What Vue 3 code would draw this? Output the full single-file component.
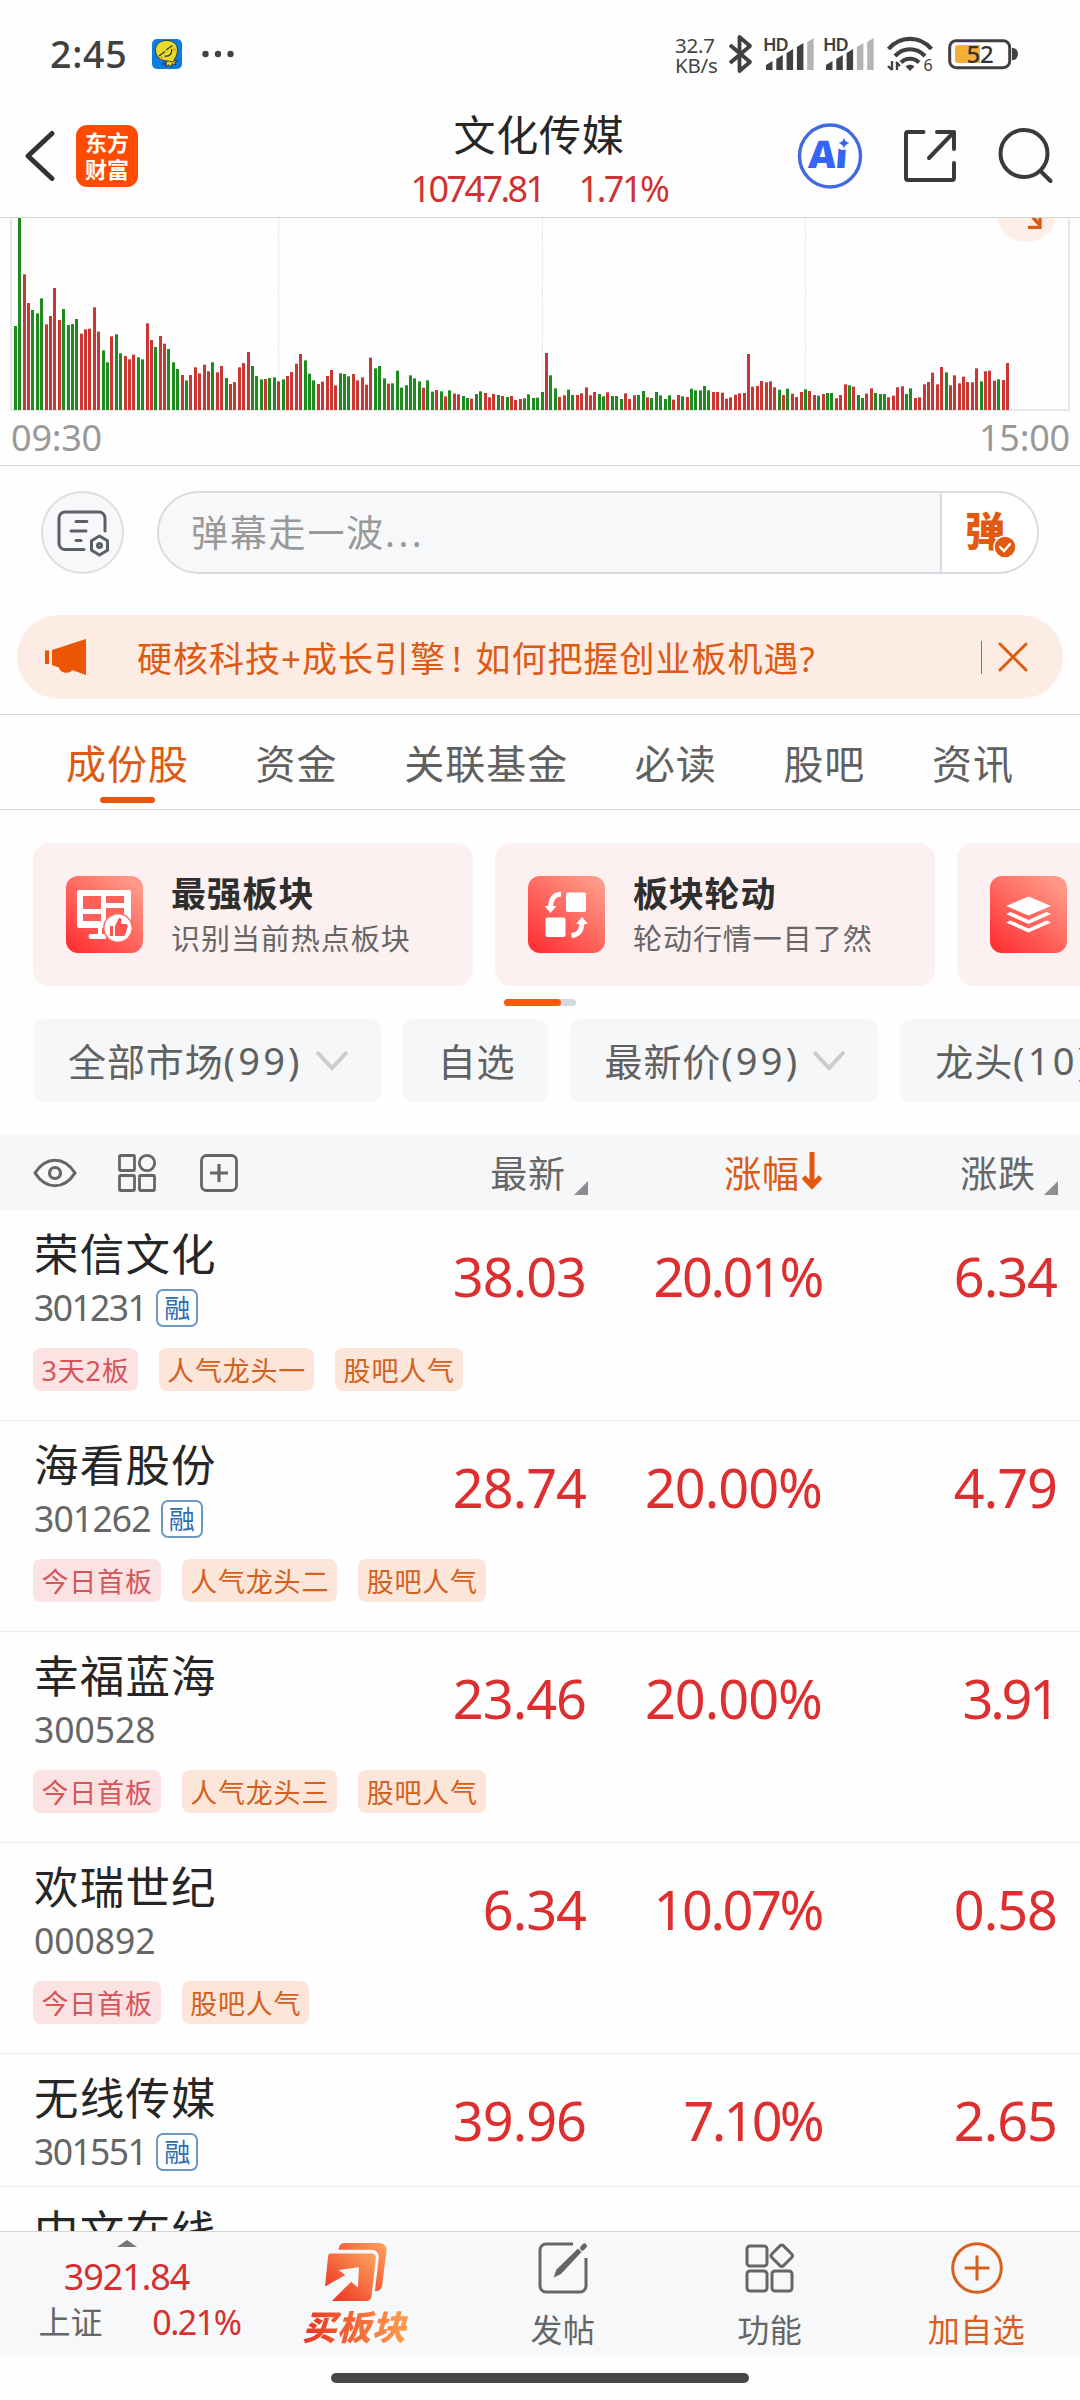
<script setup>
// Volume ticks of the session: value is the bar's top edge on a 600-unit axis, negative when the price fell.
const ticks = [
  -348, -20, 193, 279, -300, -310, -265, 343, 318, 234, 330, -297, -345, -342, -327, 371, 358, 356, 292, 365,
  -421, -457, 379, -373, -430, 438, 448, 434, -442, -448, 340, 390, -411, 378, 401, -417, -457, -477, 495, -511,
  495, 472, 490, 464, 484, -457, 487, 468, -504, 522, 516, 472, 459, 426, -468, -498, -508, 507, -504, -502,
  514, -508, 498, 486, 461, 432, -451, -491, -511, 522, 515, 498, 480, 526, -490, -492, -499, 492, 511, 502,
  524, 443, -475, -468, -505, 521, -520, -482, -533, -526, -496, -505, -514, 533, -511, -545, 540, -544, 559, -541,
  551, 553, -558, -564, 566, -552, -544, 549, 562, 552, -555, 558, -561, 558, 570, 567, -565, -553, -564, -563,
  -546, 429, -496, -535, 561, 556, -539, -555, 555, 550, 532, 556, 546, -552, -559, 547, -558, -558, -567, 550,
  567, 556, -555, -543, 562, -564, -546, -556, -567, -556, 569, 555, -559, 561, -536, -541, -541, -528, -541, 546,
  546, 548, 566, 562, 554, 550, 549, 432, 530, 528, 513, 517, 514, 532, -539, 555, -536, 551, 561, 546,
  -538, 543, 555, -557, 552, -549, -549, 565, 555, 523, -526, 530, -555, -564, 551, 535, -549, -552, -552, 562,
  557, 532, 529, -552, -535, 564, 562, 523, 516, 488, 523, 471, -487, 526, 496, 520, 500, 516, 517, 475,
  -514, 484, 482, 512, -508, 510, 459,
]
const bars = ticks.map((t, i) => ({ x: Math.round((41.5 + 13.17 * i) / 3) * 3, y: Math.abs(t), up: t > 0 }))

const tabs = ['成份股', '资金', '关联基金', '必读', '股吧', '资讯']

const stocks = [
  { name: '荣信文化', code: '301231', margin: true, price: '38.03', pct: '20.01%', diff: '6.34', tags: ['3天2板', '人气龙头一', '股吧人气'] },
  { name: '海看股份', code: '301262', margin: true, price: '28.74', pct: '20.00%', diff: '4.79', tags: ['今日首板', '人气龙头二', '股吧人气'] },
  { name: '幸福蓝海', code: '300528', price: '23.46', pct: '20.00%', diff: '3.91', tags: ['今日首板', '人气龙头三', '股吧人气'] },
  { name: '欢瑞世纪', code: '000892', price: '6.34', pct: '10.07%', diff: '0.58', tags: ['今日首板', '股吧人气'] },
  { name: '无线传媒', code: '301551', margin: true, price: '39.96', pct: '7.10%', diff: '2.65', tags: [] },
  { name: '中文在线', code: '', price: '', pct: '', diff: '', tags: [] },
]

// Tighter tracking for figures that contain the narrow digit 1.
const track = (s, k = 0.16, base = 0.018) => {
  const ones = (s.match(/1/g) || []).length
  return { letterSpacing: `${-(base + (k * ones) / (s.length || 1)).toFixed(4)}em` }
}
const levels = [[2, 24], [12.3, 18], [22.6, 12], [32.9, 6], [43.2, 1]]
</script>

<template>
  <div class="page">
    <div class="status">
      <span class="clock">2:45</span>
      <svg class="chick" width="30" height="30" viewBox="0 0 30 30">
        <rect width="30" height="30" rx="5" fill="#0f7de0" />
        <path d="M16 19l-1.500 4.500-4 1.500 4-.3-.5 3 3-2 2.500 2.500.5-3.500 4 1.500-1.500-3 3-1-3-1-1-5z" fill="#e6da2b" stroke="#222" stroke-width=".8" />
        <path d="M14.500 1.500c7 0 11 4 11 9.500 0 5-2.500 8-4.500 12l-5-1c-7 0-12-4-12.500-10-.5-6 4-10.500 11-10.500z" fill="#e6da2b" stroke="#222" stroke-width=".8" />
        <path d="M7 17l6-4.500M14 11l6.500-4.500M19.500 10c1 5-2.500 8-7 7" fill="none" stroke="#333" stroke-width="1.200" />
        <circle cx="9.500" cy="19" r="1.500" fill="#f0a02b" /><circle cx="22.500" cy="10.500" r="1.500" fill="#f0a02b" />
      </svg>
      <svg class="dots" width="32" height="8" viewBox="0 0 32 8" fill="#444"><circle cx="3.500" cy="4" r="3.200" /><circle cx="16" cy="4" r="3.200" /><circle cx="28.500" cy="4" r="3.200" /></svg>
      <span class="grow"></span>
      <div class="net"><span>32.7</span><span>KB/s</span></div>
      <svg class="bt" width="24" height="40" viewBox="0 0 24 40" fill="none" stroke="#404040" stroke-width="3.800" stroke-linejoin="round"><path d="M2 11L22 28 11.500 37V3L22 12 2 29" /></svg>
      <svg v-for="n in [4, 3]" :key="n" class="sig" width="50" height="34" viewBox="0 0 50 34">
        <text x="-1" y="14" class="hd">HD</text>
        <path v-for="(l, i) in levels" :key="i" :d="`M${l[0]} ${l[1] + 4}l6.500-4V33h-6.500z`" :fill="i < n ? '#404040' : '#b5b5b5'" stroke-linejoin="round" />
      </svg>
      <svg class="wifi" width="46" height="36" viewBox="0 0 46 36" fill="none" stroke="#404040" stroke-width="4.200">
        <path d="M1.500 13C13-.5 33-.5 44.500 13M8 20c8.500-9 21.500-9 30 0M14 26.500c5-5 13-5 18 0" />
        <path d="M18.500 30.500c2.500-2.500 6.500-2.500 9 0L23 35z" fill="#404040" stroke="none" />
        <path d="M5 25v9M5 34l-4-4M10 34v-8M9 26l4 4" stroke-width="2.400" />
        <text x="36.500" y="35" class="six">6</text>
      </svg>
      <svg class="bat" width="70" height="32" viewBox="0 0 70 32">
        <rect x="1.700" y="2.700" width="60" height="27" rx="6.500" fill="none" stroke="#404040" stroke-width="3" />
        <path d="M10 7h22v18H10a3 3 0 0 1-3-3V10a3 3 0 0 1 3-3z" fill="#f5ae36" />
        <path d="M65 11a4 5 0 0 1 0 10z" fill="#404040" stroke="#404040" stroke-width="2" />
        <text x="18.500" y="24.500" class="pc">52</text>
      </svg>
    </div>

    <header class="header">
      <div class="left">
        <svg width="32" height="54" viewBox="0 0 32 54" fill="none" stroke="#333" stroke-width="5" stroke-linecap="round" stroke-linejoin="round"><path d="M28 4.500L4 27l24 22.500" /></svg>
        <div class="logo"><span>东方</span><span>财富</span></div>
      </div>
      <div class="title">
        <h1>文化传媒</h1>
        <p><span class="idx">10747.81</span><span class="idxp">1.71%</span></p>
      </div>
      <div class="right">
        <svg width="64" height="66" viewBox="0 0 64 66">
          <ellipse cx="32" cy="33" rx="30.500" ry="31" fill="#fff" stroke="#4169e1" stroke-width="3.400" />
          <text x="10" y="45" class="ai" transform="skewX(-4) translate(3 0)">Ai</text>
          <circle cx="45" cy="20" r="7" fill="#fff" />
          <path d="M46 14.500q1 4.500 5.500 5.500-4.500 1-5.500 5.500-1-4.500-5.500-5.500 4.500-1 5.500-5.500z" fill="#3565f6" />
        </svg>
        <svg width="54" height="54" viewBox="0 0 54 54" fill="none" stroke="#3a3a3a" stroke-width="4" stroke-linecap="round" stroke-linejoin="round"><path d="M20.500 3H5a2 2 0 0 0-2 2v44a2 2 0 0 0 2 2h44a2 2 0 0 0 2-2V34M34 3h17v17M50 4L26 29" /></svg>
        <svg width="56" height="56" viewBox="0 0 56 56" fill="none" stroke="#3a3a3a" stroke-width="4" stroke-linecap="round"><circle cx="26" cy="25.500" r="23.500" /><path d="M42.500 43l10 10" /></svg>
      </div>
    </header>

    <section class="chart">
      <svg width="1080" height="192" viewBox="0 24 3240 576">
        <g stroke="#d2d2d2" stroke-width="3" stroke-dasharray="3 4"><path d="M836 24V600M1627 24V600M2416 24V600" /></g>
        <path d="M33 24V600H3207V24" fill="none" stroke="#e4e4e4" stroke-width="5" />
        <rect v-for="(b, i) in bars" :key="i" :x="b.x" :y="b.y" width="9" :height="600 - b.y" :fill="b.up ? '#ca3632' : '#1e8b1e'" />
        <circle cx="3079" cy="4" r="92" fill="#fdefe8" />
        <path d="M3092 14l26 30" fill="none" stroke="#dd5a14" stroke-width="11" /><path d="M3084 52h36V20" fill="none" stroke="#dd5a14" stroke-width="10" />
      </svg>
      <div class="times"><span>09:30</span><span>15:00</span></div>
    </section>

    <section class="danmu">
      <div class="round">
        <svg width="54" height="48" viewBox="0 0 54 48" fill="none" stroke="#5c5f63" stroke-width="3" stroke-linecap="round">
          <path d="M28 40.500H9a6 6 0 0 1-6-6V9a6 6 0 0 1 6-6h34a6 6 0 0 1 6 6V22M20 12.500h11M15 22h15M20 31.500h5" />
          <path d="M43.500 27l8 4.700v9.600l-8 4.700-8-4.700v-9.600z" stroke-linejoin="round" /><circle cx="43.500" cy="36.500" r="2" />
        </svg>
      </div>
      <div class="field">
        <span class="ph">弹幕走一波<i>...</i></span>
        <div class="dan"><span>弹</span>
          <svg class="tick" width="24" height="24" viewBox="0 0 24 24"><circle cx="12" cy="12" r="11" fill="#e25a10" stroke="#fff" stroke-width="1.500" /><path d="M7 12l4 4 6-7" fill="none" stroke="#fff" stroke-width="2.400" stroke-linecap="round" /></svg>
        </div>
      </div>
    </section>

    <section class="banner">
      <svg class="horn" width="42" height="37" viewBox="0 0 42 37" fill="#eb5505"><path d="M0 11.500h4V25H0zM7 11L41 0v36L27 31c-1 4-12 4-13-2.500L7 26z" /></svg>
      <span class="msg">硬核科技+成长引擎<i>!</i>如何把握创业板机遇?</span>
      <span class="bdiv"></span>
      <svg width="30" height="30" viewBox="0 0 30 30" stroke="#e25a10" stroke-width="3" stroke-linecap="round"><path d="M2 2l26 26M28 2L2 28" /></svg>
    </section>

    <nav class="tabs">
      <span v-for="(t, i) in tabs" :key="t" :class="{ on: i === 0 }">{{ t }}</span>
    </nav>

    <section class="cards">
      <article class="card">
        <svg width="77" height="77" viewBox="0 0 77 77">
          <defs><linearGradient id="g1" x1=".1" y1=".95" x2=".85" y2=".05"><stop offset="0" stop-color="#ff3234" /><stop offset="1" stop-color="#ff9a88" /></linearGradient></defs>
          <rect width="77" height="77" rx="12" fill="url(#g1)" />
          <path d="M13 14h50a2 2 0 0 1 2 2v34a2 2 0 0 1-2 2H36v6h4v5H24a3 3 0 0 1 0-5h8v-6H13a2 2 0 0 1-2-2V16a2 2 0 0 1 2-2z" fill="#fff" />
          <path d="M17 20h18v13H17zM40 20h18v7H40zM40 32h18v12H40zM17 38h18v7H17z" fill="#ff5f59" />
          <circle cx="52" cy="52" r="15" fill="#ff6a61" /><circle cx="52" cy="52" r="13.500" fill="#fff" />
          <path d="M44 50h3v10h-3zM49 50l4-8c3 0 3 2 2 6h5c1 0 2 1 1.500 3l-2 7c-.3 1-1 2-2 2H49z" fill="#ff5450" />
        </svg>
        <div><h2>最强板块</h2><p>识别当前热点板块</p></div>
      </article>
      <article class="card">
        <svg width="77" height="77" viewBox="0 0 77 77">
          <rect width="77" height="77" rx="12" fill="url(#g1)" />
          <rect x="38" y="16.500" width="20" height="19.500" rx="2" fill="#fff" /><rect x="17.500" y="41.500" width="20" height="19.500" rx="2" fill="#fff" />
          <path d="M33 18c-7 .5-10 4-10.500 13M43.500 59.500c7-.5 10-4 10.500-13" fill="none" stroke="#fff" stroke-width="5" />
          <path d="M16.500 30h12l-6 7zM48 48h12l-6-7z" fill="#fff" />
        </svg>
        <div><h2>板块轮动</h2><p>轮动行情一目了然</p></div>
      </article>
      <article class="card">
        <svg width="77" height="77" viewBox="0 0 77 77">
          <rect width="77" height="77" rx="12" fill="url(#g1)" />
          <path d="M38.500 20.500L61 30 38.500 39.500 16 30zM16 38l4.500-2 18 8 18-8 4.500 2-22.500 10zM16 46.500l4.500-2 18 8 18-8 4.500 2-22.500 10z" fill="#fff" />
        </svg>
      </article>
    </section>
    <div class="pager"><span></span></div>

    <section class="chips">
      <span class="chip">全部市场<i>(99)</i><svg width="34" height="22" viewBox="0 0 34 22" fill="none" stroke="#ccc" stroke-width="4"><path d="M2 2l15 16L32 2" /></svg></span>
      <span class="chip">自选</span>
      <span class="chip">最新价<i>(99)</i><svg width="34" height="22" viewBox="0 0 34 22" fill="none" stroke="#ccc" stroke-width="4"><path d="M2 2l15 16L32 2" /></svg></span>
      <span class="chip">龙头<i>(10)</i></span>
    </section>

    <div class="thead">
      <div class="tools">
        <svg width="44" height="30" viewBox="0 0 44 30" fill="none" stroke="#666" stroke-width="3.200"><path d="M2 15C13-2 31-2 42 15 31 32 13 32 2 15z" stroke-linejoin="round" /><circle cx="22" cy="15" r="5.500" /></svg>
        <svg width="38" height="38" viewBox="0 0 38 38" fill="none" stroke="#666" stroke-width="2.800"><rect x="1.500" y="1.500" width="15" height="15" rx="1" /><circle cx="29" cy="9" r="7.700" /><rect x="1.500" y="21.500" width="15" height="15" rx="1" /><rect x="21.500" y="21.500" width="15" height="15" rx="1" /></svg>
        <svg width="38" height="38" viewBox="0 0 38 38" fill="none" stroke="#666" stroke-width="2.800"><rect x="1.500" y="1.500" width="35" height="35" rx="5" /><path d="M10 19h18M19 10v18" stroke-width="3.200" /></svg>
      </div>
      <div class="th">最新<i class="corner"></i></div>
      <div class="th hot">涨幅<svg width="20" height="38" viewBox="0 0 20 38" fill="none" stroke="#e5570c" stroke-width="5"><path d="M10 0v33M1.500 25l8.500 9 8.500-9" /></svg></div>
      <div class="th">涨跌<i class="corner"></i></div>
    </div>

    <main class="list">
      <div v-for="s in stocks" :key="s.name" class="row">
        <div class="main">
          <div class="who">
            <div class="name">{{ s.name }}</div>
            <div class="code"><span :style="track(s.code, 0.13, 0.002)">{{ s.code }}</span><b v-if="s.margin">融</b></div>
          </div>
          <div class="val" :style="track(s.price)">{{ s.price }}</div>
          <div class="val" :style="track(s.pct)">{{ s.pct }}</div>
          <div class="val" :style="track(s.diff)">{{ s.diff }}</div>
        </div>
        <div v-if="s.tags.length" class="tags">
          <span v-for="(t, i) in s.tags" :key="t" :class="['tag', { pink: i === 0 }]">{{ t }}</span>
        </div>
      </div>
    </main>

    <footer class="bar">
      <div class="index">
        <svg width="20" height="7" viewBox="0 0 20 7"><path d="M0 7L10 0l10 7z" fill="#777" /></svg>
        <span class="pt">3921.84</span>
        <div class="sub"><span>上证</span><em>0.21%</em></div>
      </div>
      <div class="item">
        <svg class="buy" width="66" height="62" viewBox="0 0 66 62">
          <defs><linearGradient id="g2" x1="0" y1="1" x2="1" y2="0"><stop offset="0" stop-color="#ea2b1f" /><stop offset="1" stop-color="#ffa45c" /></linearGradient></defs>
          <path d="M15 8l.5-2.500C16 3 18 1 21 1h36c5 0 8 4 7.500 8L60 45c-.5 4-3 6-7.500 6l4-34c.5-5-2-9-7-9z" fill="url(#g2)" />
          <path d="M7 12h42c3 0 5 2 4.500 5L49 56c-.5 3-2 5-5 5H8l20-20 7 6 1-21-21 3 7 5L1 46 4 16c.3-3 1-4 3-4z" fill="url(#g2)" />
        </svg>
        <span class="buyt">买板块</span>
      </div>
      <div class="item">
        <svg width="50" height="52" viewBox="0 0 50 52" fill="none" stroke="#666" stroke-width="3"><path d="M35 2H8a6 6 0 0 0-6 6v36a6 6 0 0 0 6 6h34a6 6 0 0 0 6-6V16" /><path d="M15.500 35.500l3-8L40 6.500l3.500 3.500L23 32z" fill="#666" stroke="none" /><path d="M44.500 6l2-2" stroke-width="5" stroke-linecap="round" /></svg>
        <span>发帖</span>
      </div>
      <div class="item">
        <svg width="50" height="52" viewBox="0 0 50 52" fill="none" stroke="#666" stroke-width="3"><rect x="2" y="4" width="20" height="20" rx="3" /><rect x="2" y="29" width="20" height="20" rx="3" /><rect x="27" y="29" width="20" height="20" rx="3" /><rect x="28.500" y="5.500" width="16.500" height="16.500" rx="2.500" transform="rotate(45 36.750 13.750)" /></svg>
        <span>功能</span>
      </div>
      <div class="item add">
        <svg width="52" height="52" viewBox="0 0 52 52" fill="none" stroke="#d9601c" stroke-width="3"><circle cx="26" cy="26" r="24.300" /><path d="M13.500 26h25M26 13.500v25" /></svg>
        <span>加自选</span>
      </div>
    </footer>
    <div class="home"><span></span></div>
  </div>
</template>

<style>
body { margin: 0; background: #fefefe; }
</style>

<style scoped>
.page { width: 1080px; height: 2400px; display: flex; flex-direction: column; overflow: hidden; background: #fefefe; font-family: "Noto Sans", "Noto Sans CJK SC", sans-serif; color: #262626; }
.page > * { flex-shrink: 0; box-sizing: border-box; }
h1, h2, p { margin: 0; font-weight: 400; }
svg { display: block; flex-shrink: 0; overflow: visible; }

.status { height: 108px; padding: 0 62px 0 50px; display: flex; align-items: center; }
.clock { width: 102px; font-size: 37.500px; font-weight: 500; color: #404040; line-height: 40px; letter-spacing: .7px; }
.dots { margin-left: 20px; }
.grow { flex: 1; }
.net { width: 42px; display: flex; flex-direction: column; font-size: 20.500px; line-height: 20px; color: #444; white-space: nowrap; letter-spacing: -.2px; padding-top: 2px; }
.bt { margin-left: 11px; }
.sig { margin: 0 0 0 12px; }
.sig + .sig { margin-left: 10px; }
.hd { font-size: 18px; font-weight: 600; fill: #404040; letter-spacing: -1px; }
.wifi { margin-left: 13px; }
.six { font-size: 16px; fill: #404040; stroke: none; }
.bat { margin-left: 15px; }
.pc { font-size: 24px; font-weight: 500; fill: #333; letter-spacing: -.3px; }

.header { height: 109px; padding: 0 26px 0 24px; display: grid; grid-template-columns: 1fr auto 1fr; align-items: start; }
.left, .right { height: 96px; display: flex; align-items: center; }
.right { justify-content: flex-end; gap: 41px; }
.logo { margin-left: 20px; width: 62px; height: 62px; border-radius: 11px; background: #ff4a00; color: #fff; display: flex; flex-direction: column; align-items: center; justify-content: center; font-size: 22px; line-height: 27px; font-weight: 700; }
.title { text-align: center; }
.title h1 { font-size: 42px; line-height: 54px; letter-spacing: .8px; }
.title p { font-size: 36px; line-height: 54px; color: #cf3331; display: flex; justify-content: center; }
.idx { letter-spacing: -2.600px; margin-right: 35px; }
.idxp { letter-spacing: -2.500px; }
.ai { font-size: 38px; font-weight: 900; fill: #3565f6; letter-spacing: -1px; }

.chart { height: 249px; border-top: 1px solid #d8d8d8; border-bottom: 1px solid #d8d8d8; overflow: hidden; }
.times { display: flex; justify-content: space-between; padding: 2px 10px 0 11px; font-size: 36px; line-height: 52px; color: #999; letter-spacing: -.2px; }

.danmu { height: 149px; padding: 25px 41px 0; display: flex; gap: 33px; }
.round { box-sizing: border-box; width: 83px; height: 83px; border: 2px solid #dcdfe4; border-radius: 50%; background: #f7f8fa; display: flex; align-items: center; justify-content: center; }
.field { box-sizing: border-box; flex: 1; height: 83px; border: 2px solid #d8dbdf; border-radius: 42px; background: #f7f8fa; display: flex; overflow: hidden; }
.ph { flex: 1; padding-left: 32px; font-size: 37px; line-height: 80px; color: #999; letter-spacing: 1.800px; }
.ph i { font-style: normal; letter-spacing: 3.500px; }
.dan { position: relative; width: 95px; border-left: 2px solid #d8dbdf; background: #fff; color: #e25a10; font-size: 40px; font-weight: 900; line-height: 76px; }
.dan span { margin-left: 23px; }
.tick { position: absolute; left: 51px; top: 42px; }

.banner { margin: 0 17px; height: 84px; padding: 0 35px 0 28px; border-radius: 42px; background: #fcece3; display: flex; align-items: center; }
.horn { margin-right: 50px; }
.msg { flex: 1; font-size: 35px; letter-spacing: 1px; line-height: 82px; padding-top: 3px; color: #dd5a14; white-space: nowrap; }
.msg i { font-style: normal; margin: 0 13px 0 6px; }
.bdiv { width: 1px; height: 33px; margin-right: 16px; background: #dd5a14; }

.tabs { margin-top: 15px; height: 96px; padding: 0 66px; border-top: 1px solid #d8d8d8; border-bottom: 1px solid #d8d8d8; display: flex; gap: 66.600px; font-size: 40px; letter-spacing: 1px; line-height: 97px; color: #606060; white-space: nowrap; }
.on { position: relative; color: #dd5a14; }
.on::after { content: ""; position: absolute; left: 34px; bottom: 6px; width: 55px; height: 6px; border-radius: 3px; background: #e5570c; }

.cards { margin-top: 33px; padding-left: 33px; display: flex; gap: 22px; }
.card { box-sizing: border-box; flex: 0 0 440px; height: 143px; padding-left: 33px; border-radius: 16px; background: #fdf0f0; display: flex; align-items: center; }
.card > div { margin-left: 28px; padding-top: 5px; }
.card h2 { font-size: 35px; line-height: 44px; font-weight: 600; letter-spacing: .8px; color: #2e2e2e; }
.card p { font-size: 29px; line-height: 46px; letter-spacing: .95px; color: #666; }
.pager { margin: 13px 0 0 504px; width: 72px; height: 7px; border-radius: 4px; background: #d5d8de; }
.pager span { display: block; width: 57px; height: 7px; border-radius: 4px; background: #f55d0c; }

.chips { margin-top: 13px; padding-left: 33px; display: flex; gap: 22px; }
.chip { box-sizing: border-box; flex: none; height: 83px; padding: 0 32px 2px 35px; border-radius: 10px; background: #f6f7f9; display: flex; align-items: center; font-size: 38px; letter-spacing: .9px; color: #606060; white-space: nowrap; }
.chip i { font-style: normal; letter-spacing: 3.200px; }
.chip svg { margin-left: 12px; margin-top: 2px; }

.thead { margin-top: 33px; height: 75px; padding-left: 33px; background: #f6f7f9; display: grid; grid-template-columns: 319px 236px 234px 236px; align-items: center; }
.tools { display: flex; align-items: center; gap: 41px; }
.tools svg:last-child { margin-left: 3px; }
.th { display: flex; align-items: center; justify-content: flex-end; font-size: 37px; line-height: 73px; padding-top: 2px; color: #666; letter-spacing: .9px; }
.corner { align-self: flex-end; margin: 0 0 15px 8px; border: 7px solid transparent; border-right-color: #8e8e92; border-bottom-color: #8e8e92; }
.hot { color: #dd5a14; }
.hot svg { margin-left: 2px; margin-bottom: 5px; }

.page > .list { flex: 1 1 0; min-height: 0; overflow: hidden; }
.row { border-bottom: 1px solid #ececec; }
.main { height: 132px; display: grid; grid-template-columns: 367px 186px 236px 235px; padding-left: 33px; align-items: center; }
.who { align-self: start; padding: 20px 0 0 1px; }
.name { font-size: 44.500px; line-height: 48px; letter-spacing: 1.200px; white-space: nowrap; }
.code { margin-top: 9px; height: 40px; display: flex; align-items: center; font-size: 35.500px; line-height: 40px; color: #666; }
.code b { box-sizing: border-box; width: 42px; height: 38px; margin: 2px 0 0 10px; border: 2px solid #6c98c6; border-radius: 7px; text-align: center; font-size: 26px; line-height: 34px; font-weight: 400; color: #2e6db4; }
.val { text-align: right; font-size: 54px; line-height: 60px; color: #dd2f2f; white-space: nowrap; }
.tags { height: 78px; padding: 6px 0 0 33px; box-sizing: border-box; display: flex; gap: 21px; }
.tag { box-sizing: border-box; height: 43px; padding: 1px 8px 0 8.500px; border-radius: 8px; background: #fbe6d9; color: #d4601d; font-size: 27px; line-height: 43px; letter-spacing: .8px; }
.pink { background: #fbe2e3; color: #d5555a; }

.bar { height: 125px; border-top: 1px solid #d3d5d7; background: #f6f8f9; display: grid; grid-template-columns: 253px repeat(4, 206.750px); }
.index { display: flex; flex-direction: column; align-items: center; padding-top: 8px; }
.pt { margin-top: 10px; font-size: 36px; line-height: 40px; letter-spacing: -1.100px; color: #d52f2f; }
.sub { width: 202px; margin: 5px 0 0 26px; display: flex; justify-content: space-between; font-size: 32px; line-height: 40px; color: #666; }
.sub em { font-style: normal; font-size: 34px; letter-spacing: -1.500px; color: #d52f2f; }
.item { padding-top: 10px; display: flex; flex-direction: column; align-items: center; font-size: 32px; color: #666; }
.item > span { margin-top: 15px; line-height: 42px; letter-spacing: .5px; }
.item .buy { width: 64px; height: 60px; }
.item .buyt { margin: 4px 4px 0 0; font-size: 34px; font-weight: 900; font-style: italic; letter-spacing: .8px; padding: 0 4px; background: linear-gradient(90deg, #e5301f, #ffa050); -webkit-background-clip: text; background-clip: text; color: transparent; }
.add { color: #d9601c; }
.home { height: 44px; padding-top: 17px; }
.home span { display: block; width: 418px; height: 10px; margin: 0 auto; border-radius: 5px; background: #474747; }
</style>
